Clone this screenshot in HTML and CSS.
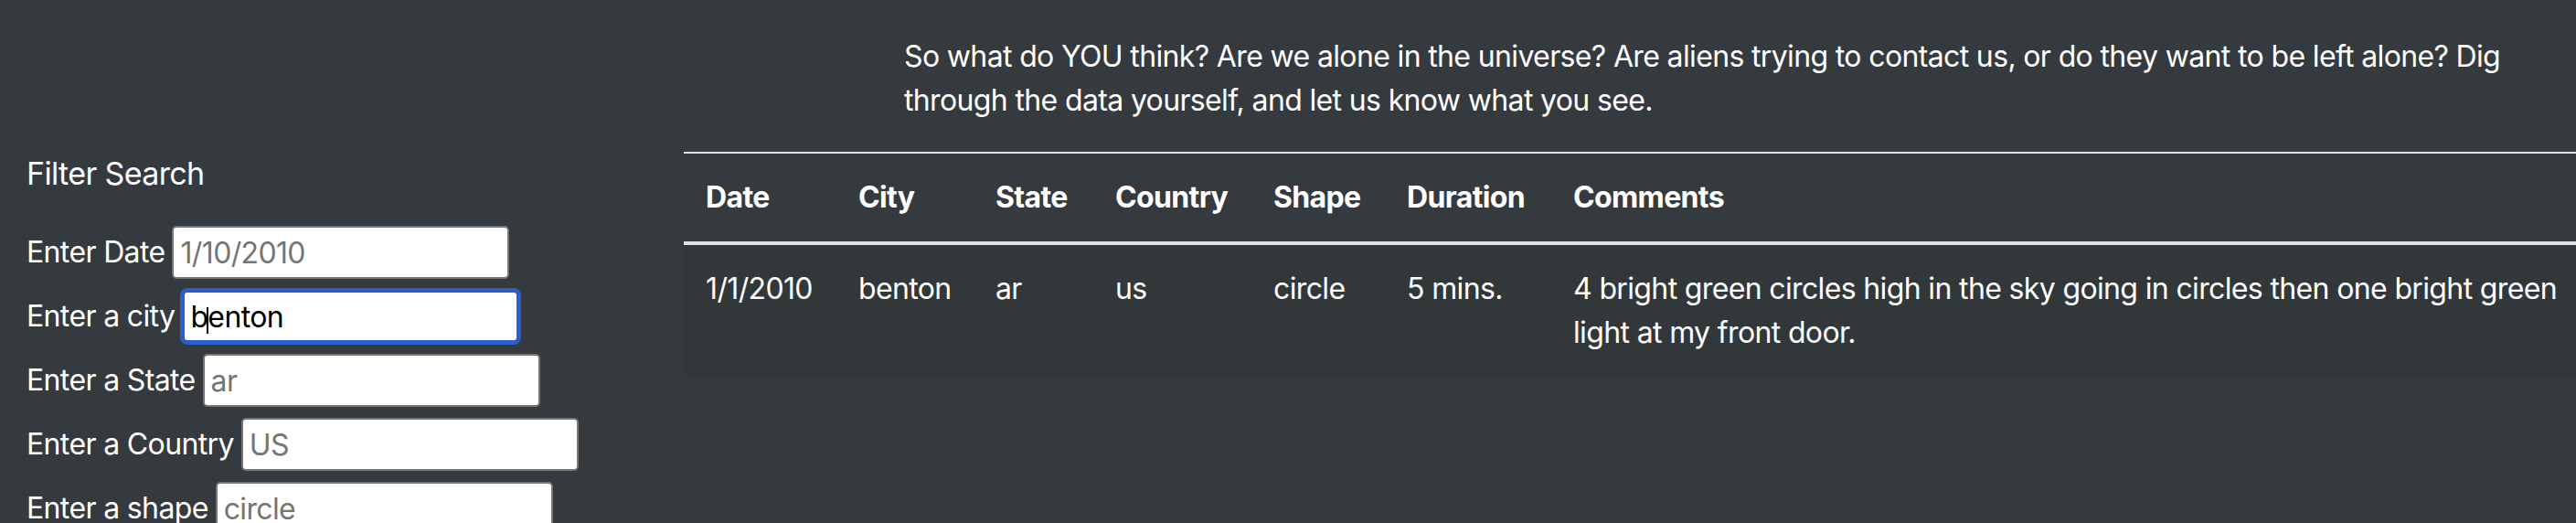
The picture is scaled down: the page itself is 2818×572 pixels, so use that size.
FILE: index.html
```html
<!DOCTYPE html>
<html lang="en">
<head>
<meta charset="utf-8">
<title>UFO Sightings</title>
<link rel="stylesheet" href="styles.css">
</head>
<body>
<div class="page">
  <aside class="filters">
    <div class="filter-title">Filter Search</div>
    <form class="filter-form">
      <div class="field">
        <label for="datetime">Enter Date</label>
        <input class="text-input" id="datetime" type="text" placeholder="1/10/2010">
      </div>
      <div class="field">
        <label for="city">Enter a city</label>
        <span class="input-wrap">
          <input class="text-input is-focused" id="city" type="text" value="benton">
          <span class="caret"></span>
        </span>
      </div>
      <div class="field">
        <label for="state">Enter a State</label>
        <input class="text-input" id="state" type="text" placeholder="ar">
      </div>
      <div class="field">
        <label for="country">Enter a Country</label>
        <input class="text-input" id="country" type="text" placeholder="US">
      </div>
      <div class="field">
        <label for="shape">Enter a shape</label>
        <input class="text-input" id="shape" type="text" placeholder="circle">
      </div>
    </form>
  </aside>
  <main class="content">
    <p class="intro">So what do YOU think? Are we alone in the universe? Are aliens trying to contact us, or do they want to be left alone? Dig through the data yourself, and let us know what you see.</p>
    <table class="ufo-table">
      <colgroup>
        <col class="c-date">
        <col class="c-city">
        <col class="c-state">
        <col class="c-country">
        <col class="c-shape">
        <col class="c-duration">
        <col>
      </colgroup>
      <thead>
        <tr>
          <th>Date</th>
          <th>City</th>
          <th>State</th>
          <th>Country</th>
          <th>Shape</th>
          <th>Duration</th>
          <th>Comments</th>
        </tr>
      </thead>
      <tbody>
        <tr class="striped">
          <td>1/1/2010</td>
          <td>benton</td>
          <td>ar</td>
          <td>us</td>
          <td>circle</td>
          <td>5 mins.</td>
          <td>4 bright green circles high in the sky going in circles then one bright green light at my front door.</td>
        </tr>
      </tbody>
    </table>
  </main>
</div>
</body>
</html>
```
FILE: styles.css
```css
html, body {
  margin: 0;
  padding: 0;
  overflow: hidden;
}

body {
  background: #353a3e;
  color: #ffffff;
  font-family: Inter, "Liberation Sans", sans-serif;
  font-size: 32px;
  line-height: 48px;
  letter-spacing: -0.02em;
}

.page {
  display: grid;
  grid-template-columns: 748px 1fr;
  width: 2818px;
  height: 572px;
}

/* Left filter column */
.filters {
  padding: 166px 0 0 29px;
}

.filter-title {
  font-size: 34px;
  line-height: 48px;
  margin-bottom: 27px;
}

.filter-form {
  display: flex;
  flex-direction: column;
}

.field {
  display: flex;
  align-items: center;
  gap: 8px;
  height: 70px;
  white-space: nowrap;
}

.input-wrap {
  position: relative;
  display: inline-flex;
}

.text-input {
  box-sizing: border-box;
  width: 369px;
  height: 58px;
  margin: 0;
  padding: 0 7px;
  border: 2px solid #767676;
  border-radius: 5px;
  background: #ffffff;
  color: #000000;
  font-family: Inter, "Liberation Sans", sans-serif;
  font-size: 32px;
  letter-spacing: -0.02em;
  outline: none;
}

.text-input::placeholder {
  color: #757575;
  opacity: 1;
}

.text-input.is-focused {
  border: 3px solid #2b5fcb;
  padding: 0 6px;
  outline: 2px solid #2b5fcb;
  outline-offset: 0;
  border-radius: 6px;
}

.caret {
  position: absolute;
  left: 27px;
  top: 19px;
  width: 2px;
  height: 29px;
  background: #000000;
}

/* Right content column */
.content {
  min-width: 0;
}

.intro {
  margin: 38px 0 32px 241px;
  width: 1800px;
}

.ufo-table {
  width: calc(100% + 40px);
  table-layout: fixed;
  border-collapse: separate;
  border-spacing: 0;
}

.c-date { width: 167px; }
.c-city { width: 150px; }
.c-state { width: 131px; }
.c-country { width: 173px; }
.c-shape { width: 146px; }
.c-duration { width: 182px; }

.ufo-table th,
.ufo-table td {
  padding: 24px;
  text-align: left;
}

.ufo-table th {
  font-weight: 700;
  vertical-align: bottom;
  border-top: 2px solid #dee2e6;
  border-bottom: 4px solid #dee2e6;
}

.ufo-table td {
  font-weight: 400;
  vertical-align: top;
}

.striped {
  background: rgba(0, 0, 0, 0.05);
}
```
